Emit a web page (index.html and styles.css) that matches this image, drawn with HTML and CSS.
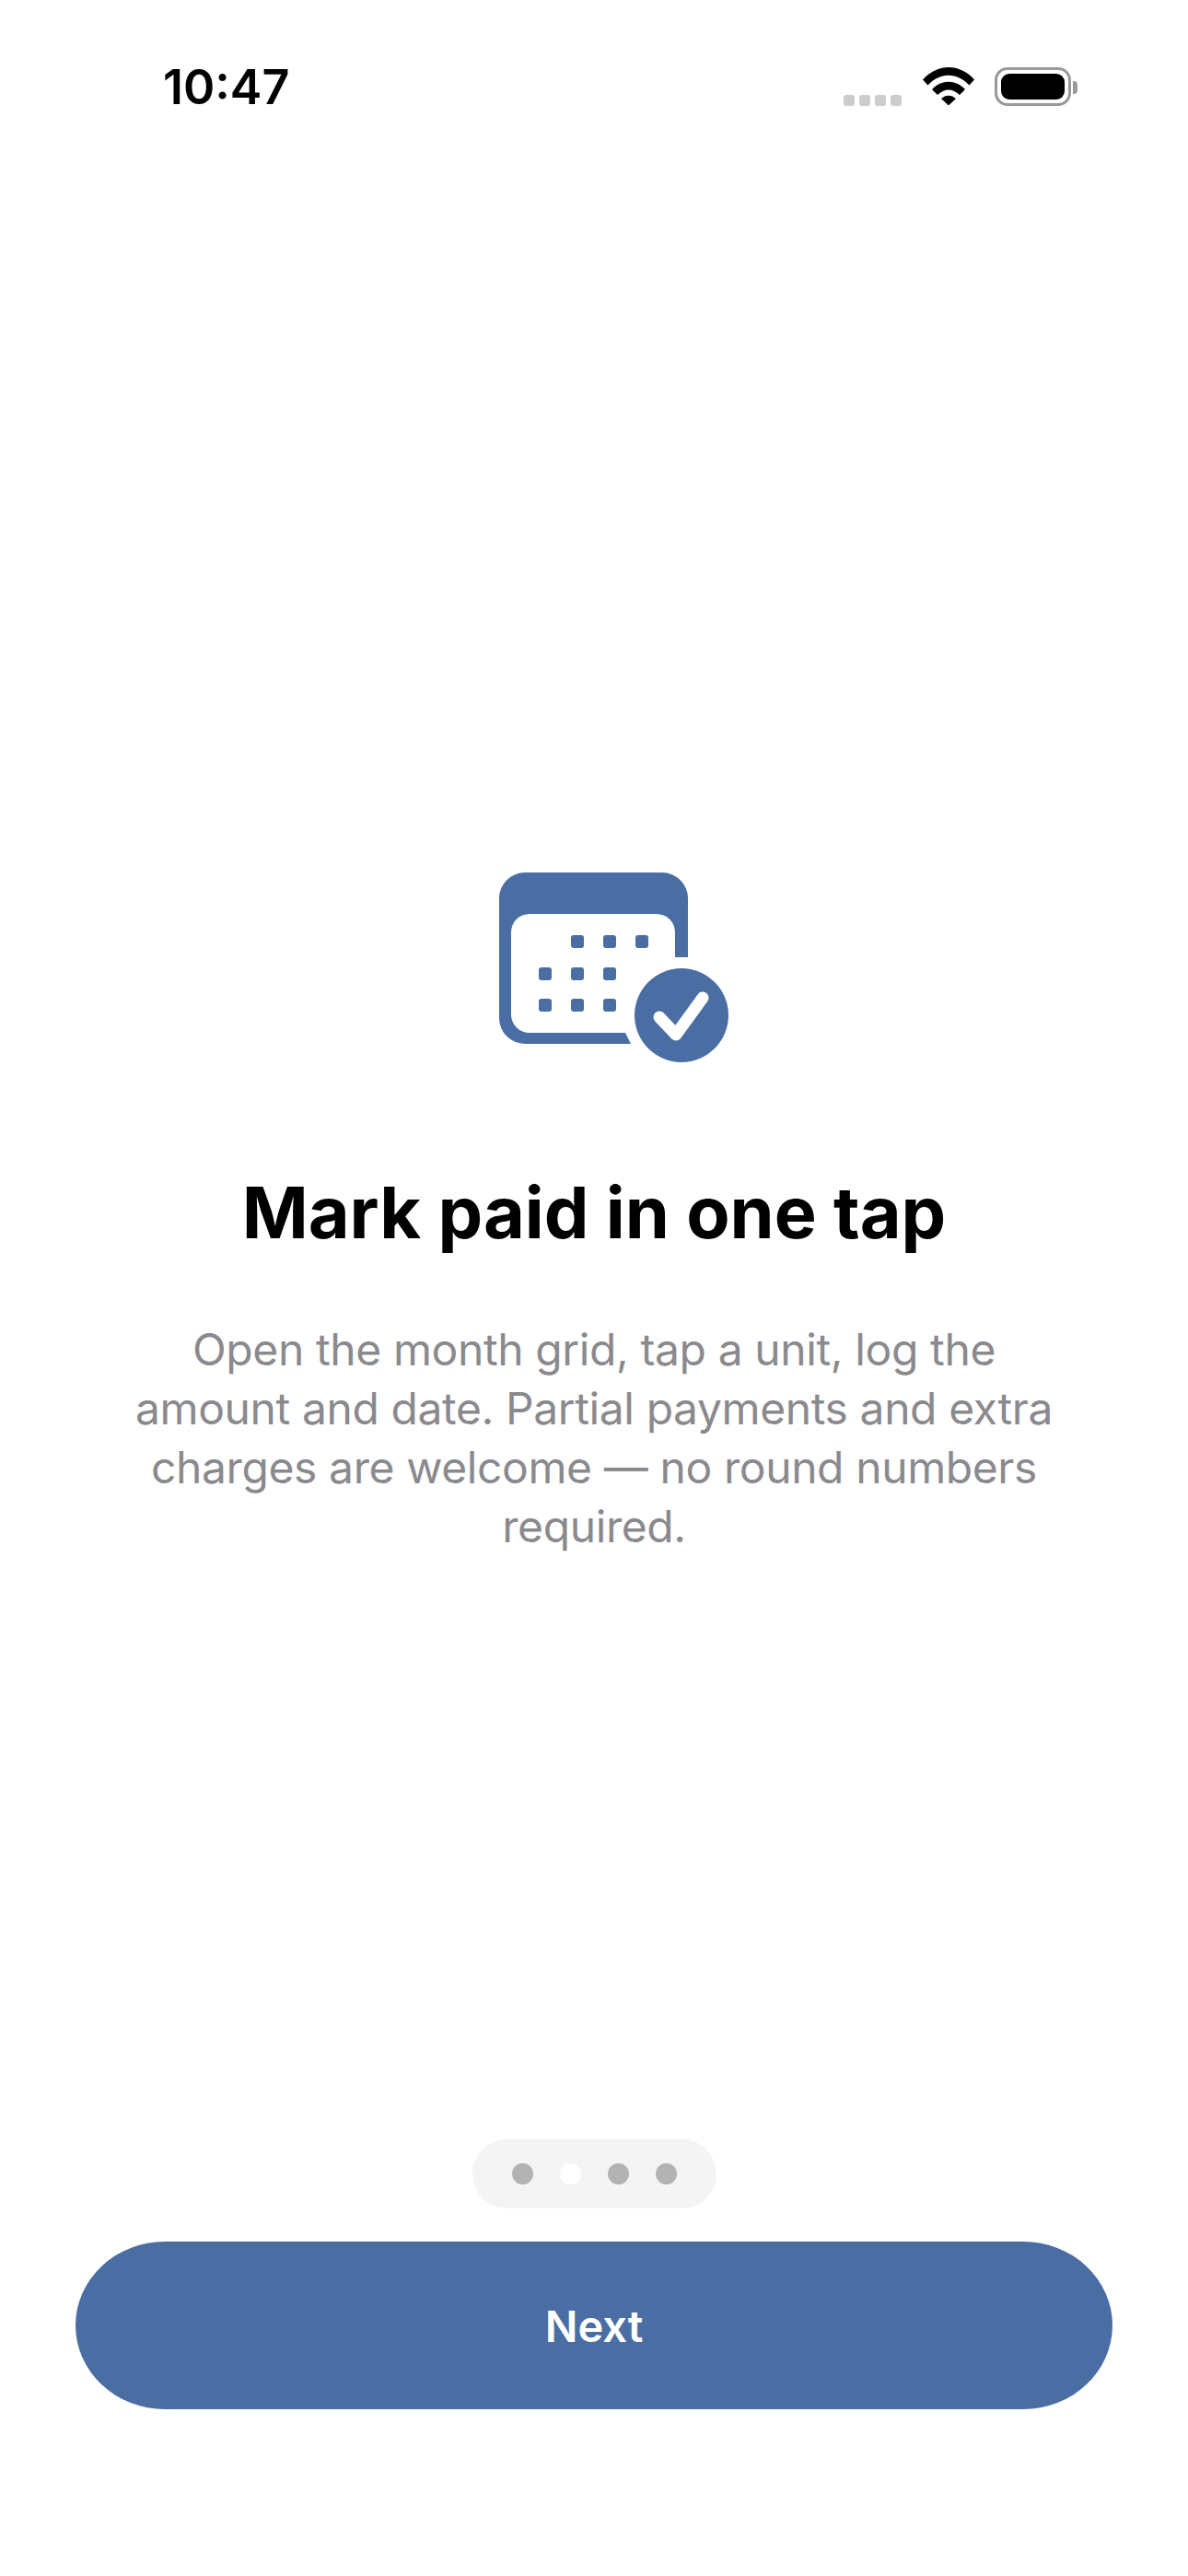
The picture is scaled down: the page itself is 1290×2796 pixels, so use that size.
FILE: index.html
```html
<!DOCTYPE html>
<html lang="en">
<head>
	<meta charset="UTF-8">
	<title>Mark paid in one tap</title>
	<link rel="stylesheet" href="styles.css">
</head>
<body>
<div class="status">
	<span class="time">10:47</span>
	<div class="sysicons">
		<div class="signal"><i></i><i></i><i></i><i></i></div>
		<svg class="wifi" width="56" height="42" viewBox="0 0 56 42">
			<path d="M0 14.500C15.500 -3.500 40.500 -3.500 56 14.500L50.500 20.500C37 6 19 6 5.500 20.500Z"/>
			<path d="M10 25C20 14 36 14 46 25L40 31C32.500 23.500 23.500 23.500 16 31Z"/>
			<path d="M20 35C25 30.500 31 30.500 36 35L28 42.500Z"/>
		</svg>
		<div class="battery"><div class="battery-fill"></div></div>
		<div class="battery-cap"></div>
	</div>
</div>
<main class="main">
	<svg class="hero" width="260" height="210" viewBox="0 0 260 210">
		<path class="blue" d="M30 2H179A28 28 0 0 1 207 30V94H193V67A20 20 0 0 0 173 47H35A20 20 0 0 0 15 67V156A20 20 0 0 0 35 176H139L145 188H30A28 28 0 0 1 2 160V30A28 28 0 0 1 30 2Z"/>
		<g class="blue">
			<rect x="80" y="70" width="14" height="14" rx="3"/>
			<rect x="115" y="70" width="14" height="14" rx="3"/>
			<rect x="150" y="70" width="14" height="14" rx="3"/>
			<rect x="45" y="105" width="14" height="14" rx="3"/>
			<rect x="80" y="105" width="14" height="14" rx="3"/>
			<rect x="115" y="105" width="14" height="14" rx="3"/>
			<rect x="45" y="139" width="14" height="14" rx="3"/>
			<rect x="80" y="139" width="14" height="14" rx="3"/>
			<rect x="115" y="139" width="14" height="14" rx="3"/>
		</g>
		<circle class="blue" cx="200" cy="157" r="51"/>
		<path class="tick" d="M176 159L194 178L223 138"/>
	</svg>
	<h1 class="title">Mark paid in one tap</h1>
	<p class="desc">Open the month grid, tap a unit, log the amount and date. Partial payments and extra charges are welcome — no round numbers required.</p>
</main>
<div class="pager">
	<span class="dot"></span>
	<span class="dot on"></span>
	<span class="dot"></span>
	<span class="dot"></span>
</div>
<button class="next" type="button">Next</button>
</body>
</html>
```

FILE: styles.css
```css
html, body {
	margin: 0;
	height: 100%;
}
body {
	width: 1290px;
	height: 2796px;
	background: #fff;
	font-family: Inter, "Liberation Sans", sans-serif;
	display: flex;
	flex-direction: column;
	align-items: center;
	overflow: hidden;
}
.status {
	width: 100%;
	box-sizing: border-box;
	height: 190px;
	padding: 62px 120px 0 177px;
	display: flex;
	justify-content: space-between;
	align-items: flex-start;
}
.time {
	font-size: 52px;
	font-weight: 600;
	line-height: 66px;
	color: #000;
}
.sysicons {
	display: flex;
	align-items: center;
	height: 66px;
}
.signal {
	display: flex;
	gap: 5px;
	margin-top: 27px;
	margin-right: 23px;
}
.signal i {
	width: 12px;
	height: 12px;
	border-radius: 3px;
	background: #ccc;
}
.wifi {
	fill: #000;
	margin-right: 22px;
	margin-top: -5px;
}
.battery {
	width: 83px;
	height: 42px;
	box-sizing: border-box;
	border: 3px solid #999;
	border-radius: 14px;
	padding: 4px;
	margin-top: -2px;
}
.battery-fill {
	height: 100%;
	background: #000;
	border-radius: 9px;
}
.battery-cap {
	width: 5px;
	height: 14px;
	margin-left: 2px;
	background: #999;
	border-radius: 0 4px 4px 0;
}
.main {
	flex: 1;
	display: flex;
	flex-direction: column;
	align-items: center;
	padding-top: 755px;
}
.hero {
	display: block;
	margin-left: 50px;
}
.blue {
	fill: #4a6ea4;
}
.tick {
	fill: none;
	stroke: #fff;
	stroke-width: 13;
	stroke-linecap: round;
	stroke-linejoin: round;
}
.title {
	margin: 116px 0 0;
	font-size: 77.3px;
	line-height: 90px;
	font-weight: 700;
	color: #000;
	text-align: center;
}
.desc {
	margin: 72px 0 0;
	width: 1040px;
	font-size: 48px;
	line-height: 64px;
	letter-spacing: -0.4px;
	color: #8a8a8e;
	text-align: center;
}
.pager {
	display: flex;
	gap: 29px;
	align-items: center;
	padding: 0 43px;
	height: 75px;
	background: #f4f4f4;
	border-radius: 38px;
}
.dot {
	width: 23px;
	height: 23px;
	border-radius: 50%;
	background: #b3b3b3;
}
.dot.on {
	background: #fff;
}
.next {
	display: block;
	width: 1126px;
	height: 182px;
	margin: 36px 0 181px;
	border: 0;
	border-radius: 97px / 91px;
	background: #4a6ea4;
	color: #fff;
	font-family: Inter, "Liberation Sans", sans-serif;
	font-size: 47px;
	font-weight: 600;
}
```
